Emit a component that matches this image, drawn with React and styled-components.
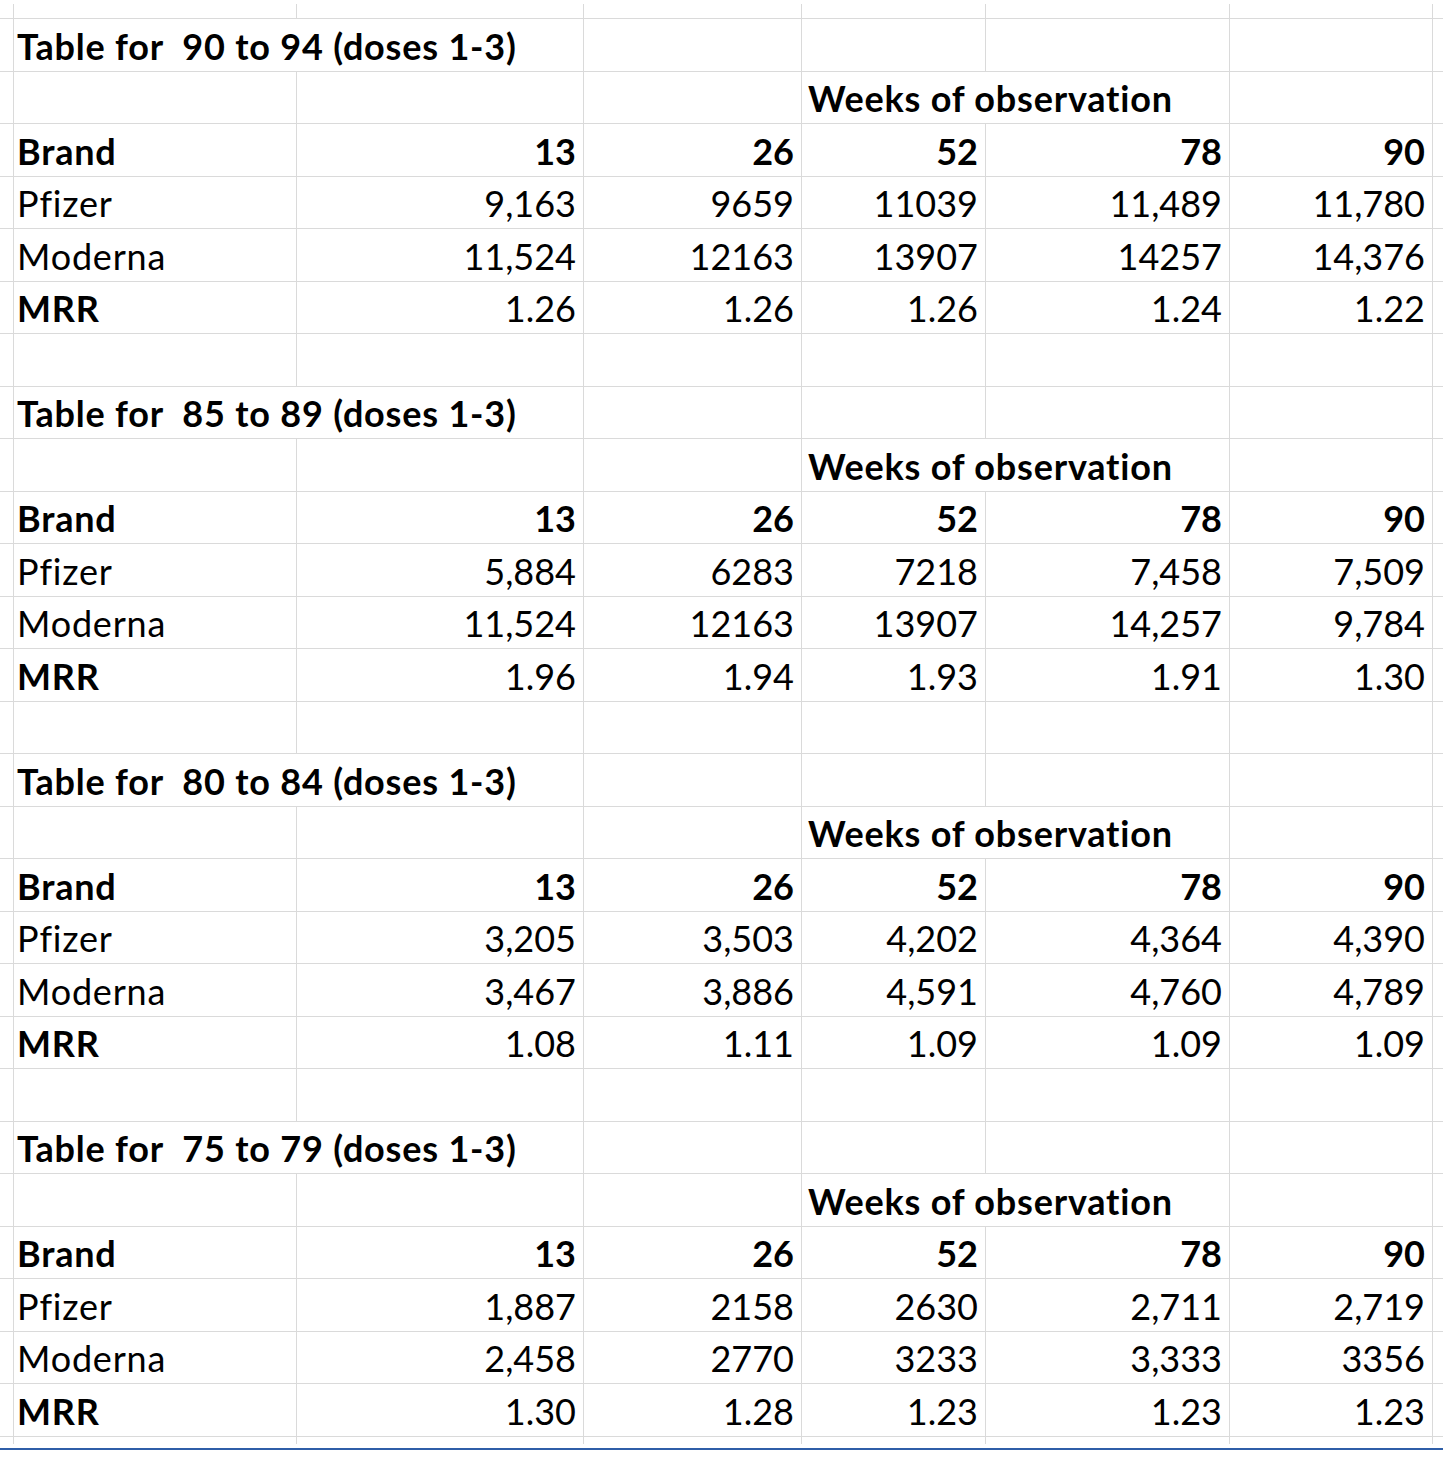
import React from "react";
import styled, { createGlobalStyle } from "styled-components";

const GlobalStyle = createGlobalStyle`
  html, body {
    margin: 0;
    padding: 0;
    background: #fff;
  }
  body {
    font-family: Lato, "Open Sans", sans-serif;
    color: #000;
  }
`;

const COLS = "11px 286px 287px 218px 184px 244px 203px 11px";

const tables = [
  {
    range: "90 to 94",
    pfizer: ["9,163", "9659", "11039", "11,489", "11,780"],
    moderna: ["11,524", "12163", "13907", "14257", "14,376"],
    mrr: ["1.26", "1.26", "1.26", "1.24", "1.22"],
  },
  {
    range: "85 to 89",
    pfizer: ["5,884", "6283", "7218", "7,458", "7,509"],
    moderna: ["11,524", "12163", "13907", "14,257", "9,784"],
    mrr: ["1.96", "1.94", "1.93", "1.91", "1.30"],
  },
  {
    range: "80 to 84",
    pfizer: ["3,205", "3,503", "4,202", "4,364", "4,390"],
    moderna: ["3,467", "3,886", "4,591", "4,760", "4,789"],
    mrr: ["1.08", "1.11", "1.09", "1.09", "1.09"],
  },
  {
    range: "75 to 79",
    pfizer: ["1,887", "2158", "2630", "2,711", "2,719"],
    moderna: ["2,458", "2770", "3233", "3,333", "3356"],
    mrr: ["1.30", "1.28", "1.23", "1.23", "1.23"],
  },
];

const weeks = ["13", "26", "52", "78", "90"];

const Sheet = styled.div`
  width: 1443px;
  padding-top: 4px;
`;

const Row = styled.div`
  display: grid;
  grid-template-columns: ${COLS};
  height: ${(p) => p.$h || 52.5}px;
  box-sizing: border-box;
  border-bottom: ${(p) => (p.$noLine ? "none" : "1px solid #dadada")};
`;

const Cell = styled.div`
  box-sizing: border-box;
  display: flex;
  align-items: flex-end;
  justify-content: ${(p) => (p.$right ? "flex-end" : "flex-start")};
  padding: 0 7px 7px 6px;
  border-right: ${(p) => (p.$edge ? "none" : "1px solid #dadada")};
  grid-column: span ${(p) => p.$span || 1};
  font-size: 36px;
  line-height: 1;
  font-weight: ${(p) => (p.$bold ? 700 : 400)};
  letter-spacing: ${(p) => (p.$text ? "0.8px" : "0")};
  white-space: pre;
  overflow: visible;
`;

const BlueRule = styled.div`
  width: 1443px;
  height: 2px;
  margin-top: 5px;
  background: #2f5ea8;
`;

const Blank = ({ h, noLine }) => (
  <Row $h={h} $noLine={noLine}>
    <Cell />
    <Cell />
    <Cell />
    <Cell />
    <Cell />
    <Cell />
    <Cell />
    <Cell $edge />
  </Row>
);

const DataRow = ({ label, values, bold, boldValues }) => (
  <Row>
    <Cell />
    <Cell $bold={bold} $text>
      {label}
    </Cell>
    {values.map((v, i) => (
      <Cell key={i} $right $bold={boldValues}>
        {v}
      </Cell>
    ))}
    <Cell $edge />
  </Row>
);

const Table = ({ t, last }) => (
  <>
    <Row>
      <Cell />
      <Cell $span={2} $bold $text>
        {`Table for  ${t.range} (doses 1-3)`}
      </Cell>
      <Cell />
      <Cell />
      <Cell />
      <Cell />
      <Cell $edge />
    </Row>
    <Row>
      <Cell />
      <Cell />
      <Cell />
      <Cell />
      <Cell $span={2} $bold $text>
        Weeks of observation
      </Cell>
      <Cell />
      <Cell $edge />
    </Row>
    <DataRow label="Brand" values={weeks} bold boldValues />
    <DataRow label="Pfizer" values={t.pfizer} />
    <DataRow label="Moderna" values={t.moderna} />
    <DataRow label="MRR" values={t.mrr} bold />
    {!last && <Blank />}
  </>
);

export default function App() {
  return (
    <>
      <GlobalStyle />
      <Sheet>
        <Blank h={15} />
        {tables.map((t, i) => (
          <Table key={t.range} t={t} last={i === tables.length - 1} />
        ))}
        <Blank h={6} noLine />
        <BlueRule />
      </Sheet>
    </>
  );
}
